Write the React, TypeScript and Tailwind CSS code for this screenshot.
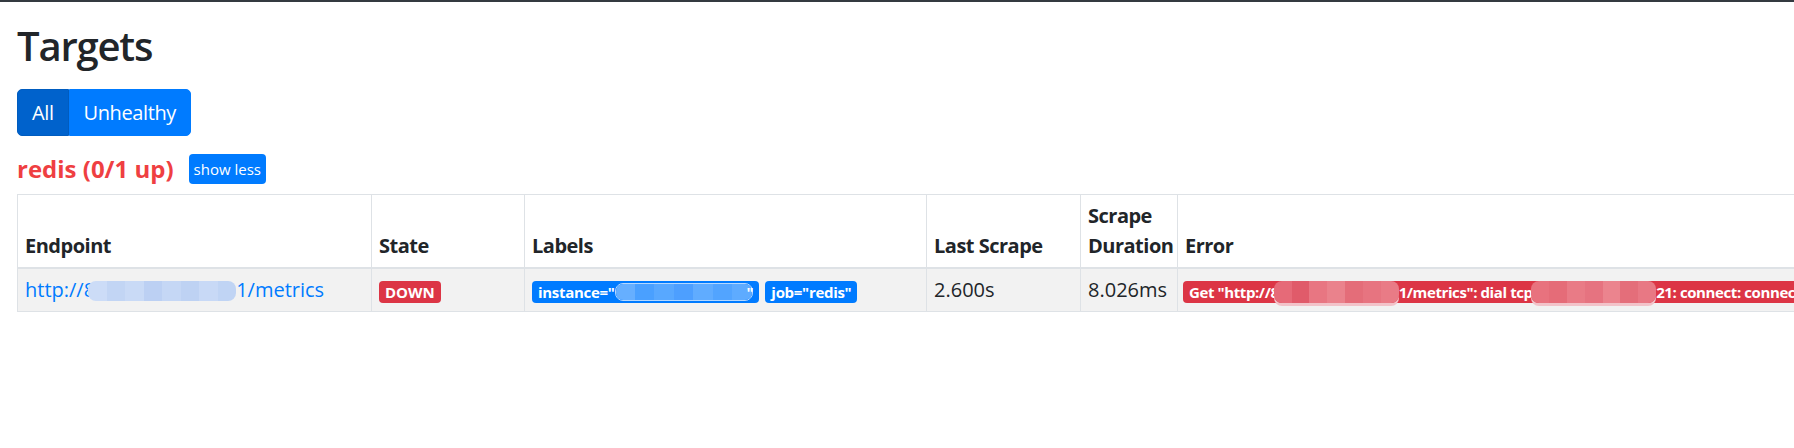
import React from 'react';

// blurred (redacted) stretch of text, drawn as a strip of mosaic tiles
function Mosaic({ colors, width, height, className = '' }: { colors: string[]; width: number; height: number; className?: string }) {
    return (
        <span
            className={`inline-flex overflow-hidden align-middle rounded-[8px] ${className}`}
            style={{ width, height }}
        >
            {colors.map((c, i) => (
                <span key={i} className="flex-1 h-full" style={{ backgroundColor: c }} />
            ))}
        </span>
    );
}

const endpointBlur = ['#ccdcf7', '#c2d5f4', '#c9daf6', '#bcd0f3', '#c5d7f5', '#bed2f3', '#c8d9f6', '#c0d4f4'];
const instanceBlur = ['#66afff', '#4aa0ff', '#58a8ff', '#4d9fff', '#60acff', '#52a4ff', '#5eabff'];
const errorBlurA = ['#e66a78', '#e05b6a', '#e87682', '#ea828c', '#e46d79', '#e77480', '#e97b86'];
const errorBlurB = ['#e8727e', '#e56c78', '#e97b86', '#e67380', '#eb848e', '#e46e7a', '#e87884'];

const columns = [
    { label: 'Endpoint', width: 'w-[354px]' },
    { label: 'State', width: 'w-[153px]' },
    { label: 'Labels', width: 'w-[402px]' },
    { label: 'Last Scrape', width: 'w-[154px]' },
    { label: 'Scrape Duration', width: 'w-[97px]' },
    { label: 'Error', width: 'w-[1100px]' },
];

export default function App() {
    return (
        <div className="w-full h-[448px] overflow-hidden bg-white text-[#212529] font-['Open_Sans',sans-serif]">
            <div className="h-[2px] bg-[#343a40]" />

            <div className="pl-[17px]">
                {/* Header */}
                <h2 className="mt-[20px] mb-[19px] text-[40px] leading-[48px] font-semibold tracking-[-1.2px]">Targets</h2>

                {/* Filter */}
                <div className="flex">
                    <button className="h-[47px] px-[14px] text-[20px] tracking-[-0.4px] text-white bg-[#0062cc] border border-[#005cbf] rounded-l-[5px]">
                        All
                    </button>
                    <button className="h-[47px] px-[14px] text-[20px] tracking-[-0.4px] text-white bg-[#007bff] border border-[#007bff] rounded-r-[5px]">
                        Unhealthy
                    </button>
                </div>

                {/* Scrape pool */}
                <div className="mt-[18px] flex items-center gap-[15px]">
                    <span className="text-[24px] leading-[30px] font-bold text-[#ef3f42]">redis (0/1 up)</span>
                    <button className="h-[30px] px-[5px] text-[15px] text-white bg-[#007bff] rounded-[4px]">show less</button>
                </div>

                <table className="mt-[10px] table-fixed border-collapse text-[20px] leading-[30px] w-[2260px]">
                    <thead>
                        <tr>
                            {columns.map((col) => (
                                <th
                                    key={col.label}
                                    className={`${col.width} px-[7px] py-[6px] text-left align-bottom font-bold tracking-[-0.5px] border border-[#dee2e6] border-b-2`}
                                >
                                    {col.label}
                                </th>
                            ))}
                        </tr>
                    </thead>
                    <tbody>
                        <tr className="bg-[#f2f2f2]">
                            <td className="px-[7px] py-[6px] border border-[#dee2e6] whitespace-nowrap">
                                <a className="text-[#007bff]">
                                    http://8
                                    <Mosaic colors={endpointBlur} width={148} height={20} className="-ml-[7px] -mt-[2px]" />
                                    1/metrics
                                </a>
                            </td>
                            <td className="px-[7px] py-[6px] border border-[#dee2e6]">
                                <span className="inline-block px-[6px] leading-[22px] text-[15px] font-bold text-white bg-[#dc3545] rounded-[4px] align-middle">
                                    DOWN
                                </span>
                            </td>
                            <td className="px-[7px] py-[6px] border border-[#dee2e6] whitespace-nowrap">
                                <span className="inline-flex items-center h-[22px] px-[6px] text-[15px] font-bold tracking-[-0.3px] text-white bg-[#007bff] rounded-[4px] align-middle mr-[6px]">
                                    instance="
                                    <Mosaic colors={instanceBlur} width={138} height={18} className="border border-[#b5d8ff] -mr-[6px]" />
                                    "
                                </span>
                                <span className="inline-flex items-center h-[22px] px-[6px] text-[15px] font-bold tracking-[-0.3px] text-white bg-[#007bff] rounded-[4px] align-middle">
                                    job="redis"
                                </span>
                            </td>
                            <td className="px-[7px] py-[6px] border border-[#dee2e6]">2.600s</td>
                            <td className="px-[7px] py-[6px] border border-[#dee2e6]">8.026ms</td>
                            <td className="px-[5px] py-[6px] border border-[#dee2e6] whitespace-nowrap">
                                <span className="inline-flex items-center h-[22px] px-[6px] text-[15px] font-bold tracking-[-0.4px] text-white bg-[#dc3545] rounded-[4px] align-middle">
                                    Get "http://8
                                    <Mosaic colors={errorBlurA} width={125} height={22} className="-ml-[5px] shadow-[0_3px_0_#f2c3c9]" />
                                    1/metrics": dial tcp&nbsp;
                                    <Mosaic colors={errorBlurB} width={125} height={22} className="-ml-[5px] shadow-[0_3px_0_#f2c3c9]" />
                                    21: connect: connection refused
                                </span>
                            </td>
                        </tr>
                    </tbody>
                </table>
            </div>
        </div>
    );
}
